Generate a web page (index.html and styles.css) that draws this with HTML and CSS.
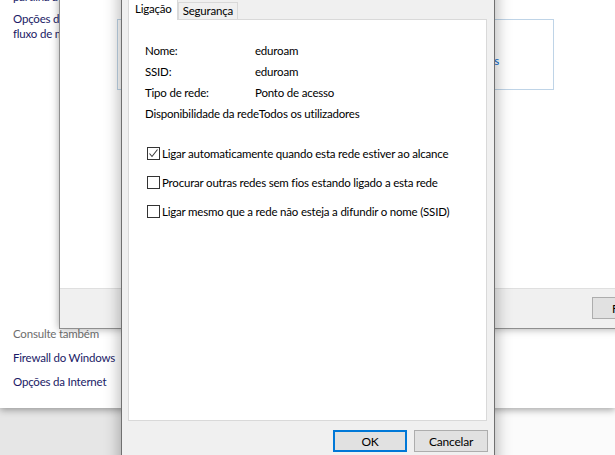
FILE: index.html
```html
<!DOCTYPE html>
<html lang="pt">
<head>
<meta charset="UTF-8">
<title>Propriedades de rede sem fios</title>
<link rel="stylesheet" href="styles.css">
</head>
<body>
<div class="desktop">
    <!-- Window behind everything, bottom right -->
    <div class="win back-win"></div>

    <!-- Control panel: Network and Sharing Center -->
    <div class="win cpanel">
        <div class="sidebar">
            <ul class="side-links">
                <li>Alterar definições de partilha avançadas</li>
                <li>Opções de transmissão em fluxo de multimédia</li>
            </ul>
            <div class="see-also">
                <div class="see-title">Consulte também</div>
                <div class="see-link">Firewall do Windows</div>
                <div class="see-link">Opções da Internet</div>
            </div>
        </div>
    </div>

    <!-- Wi-Fi status window -->
    <div class="win netwin">
        <div class="net-body">
            <div class="net-box">
                <span class="net-link">Propriedades de Rede Sem Fios</span>
            </div>
        </div>
        <div class="net-footer">
            <button class="btn">Fechar</button>
        </div>
    </div>

    <!-- Wireless network properties dialog -->
    <div class="win dialog">
        <div class="tabs">
            <span class="tab active">Ligação</span>
            <span class="tab">Segurança</span>
        </div>
        <div class="tab-panel">
            <div class="props">
                <div class="prop"><span class="prop-label">Nome:</span><span>eduroam</span></div>
                <div class="prop"><span class="prop-label">SSID:</span><span>eduroam</span></div>
                <div class="prop"><span class="prop-label">Tipo de rede:</span><span>Ponto de acesso</span></div>
                <div class="prop"><span class="prop-label">Disponibilidade da rede</span><span>Todos os utilizadores</span></div>
            </div>
            <div class="options">
                <div class="option">
                    <span class="checkbox">
                        <svg width="11" height="11" viewBox="0 0 11 11"><polyline points="1.5,5.5 4,8.5 9.5,1.5" fill="none" stroke="#3c3c3c" stroke-width="1.1"/></svg>
                    </span>
                    <span>Ligar automaticamente quando esta rede estiver ao alcance</span>
                </div>
                <div class="option">
                    <span class="checkbox"></span>
                    <span>Procurar outras redes sem fios estando ligado a esta rede</span>
                </div>
                <div class="option">
                    <span class="checkbox"></span>
                    <span>Ligar mesmo que a rede não esteja a difundir o nome (SSID)</span>
                </div>
            </div>
        </div>
        <div class="dialog-buttons">
            <button class="btn default">OK</button>
            <button class="btn">Cancelar</button>
        </div>
    </div>
</div>
</body>
</html>
```

FILE: styles.css
```css
/* Page = desktop */
body {
    margin: 0;
    font-family: "Segoe UI", Lato, sans-serif;
    font-size: 11.5px;
    letter-spacing: -0.2px;
    color: #000;
}
.desktop {
    position: relative;
    width: 615px;
    height: 455px;
    overflow: hidden;
    background-color: #e6e6e6;
}
.win {
    position: absolute;
    box-sizing: border-box;
}
/* Window peeking out at bottom right */
.back-win {
    left: 300px;
    top: 400px;
    width: 400px;
    height: 100px;
    background-color: #fbfbfb;
}
/* Control panel */
.cpanel {
    left: 0;
    top: -30px;
    width: 615px;
    height: 438px;
    background-color: #fff;
    box-shadow: 0 2px 7px rgba(0, 0, 0, 0.35);
}
.sidebar {
    display: flex;
    flex-direction: column;
    box-sizing: border-box;
    height: 100%;
    width: 150px;
    padding: 4px 0 18px 13px;
}
.side-links {
    list-style: none;
    margin: 0;
    padding: 0;
    color: #1a1a66;
    line-height: 15px;
}
.side-links li {
    margin-bottom: 7px;
}
.see-also {
    margin-top: auto;
    line-height: 16px;
}
.see-title {
    color: #6d6d6d;
    margin-bottom: 4px;
    white-space: nowrap;
}
.see-link {
    color: #1a1a66;
    margin-top: 8px;
    white-space: nowrap;
}
/* Network status window */
.netwin {
    left: 59px;
    top: -20px;
    width: 617px;
    height: 349px;
    display: flex;
    flex-direction: column;
    background-color: #fff;
    border: 1px solid #8f8f8f;
    box-shadow: 0 0 8px rgba(0, 0, 0, 0.35);
}
.net-body {
    flex: 1;
    padding: 38px 0 0 57px;
}
.net-box {
    box-sizing: border-box;
    width: 437px;
    height: 71px;
    padding: 33px 54px 0 0;
    border: 1px solid #bfd4e7;
    text-align: right;
    line-height: 16px;
}
.net-link {
    color: #0066cc;
    white-space: nowrap;
}
.net-footer {
    height: 40px;
    display: flex;
    align-items: flex-start;
    padding: 8px 0 0 532px;
    box-sizing: border-box;
    background-color: #f0f0f0;
    border-top: 1px solid #dfdfdf;
}
/* Buttons */
.btn {
    box-sizing: border-box;
    width: 74px;
    height: 22px;
    padding: 0;
    font-family: inherit;
    font-size: 12px;
    letter-spacing: inherit;
    color: #000;
    background-color: #e1e1e1;
    border: 1px solid #adadad;
}
.btn.default {
    border: 2px solid #0078d7;
}
/* Dialog */
.dialog {
    left: 121px;
    top: -30px;
    width: 374px;
    height: 520px;
    padding: 28px 7px 0 6px;
    background-color: #f0f0f0;
    border: 1px solid #707070;
    box-shadow: 0 0 14px 2px rgba(0, 0, 0, 0.28);
}
.tabs {
    display: flex;
    align-items: flex-end;
    height: 20px;
}
.tab {
    box-sizing: border-box;
    height: 17px;
    padding: 0 4px;
    line-height: 15px;
    white-space: nowrap;
    background-color: #f0f0f0;
    border: 1px solid #d9d9d9;
    border-bottom: none;
}
.tab.active {
    position: relative;
    z-index: 1;
    height: 21px;
    margin-bottom: -1px;
    padding: 0 5px 0 6px;
    line-height: 18px;
    background-color: #fff;
}
.tab-panel {
    box-sizing: border-box;
    height: 402px;
    padding: 20px 0 0 16px;
    background-color: #fff;
    border: 1px solid #d9d9d9;
}
.prop {
    display: flex;
    line-height: 21px;
    white-space: nowrap;
}
.prop-label {
    min-width: 110px;
}
.options {
    display: flex;
    flex-direction: column;
    gap: 13px;
    margin-top: 21px;
    padding-left: 2px;
}
.option {
    display: flex;
    align-items: center;
    gap: 2px;
    height: 16px;
    white-space: nowrap;
}
.checkbox {
    display: flex;
    flex-shrink: 0;
    align-items: center;
    justify-content: center;
    box-sizing: border-box;
    width: 13px;
    height: 13px;
    background-color: #fff;
    border: 1px solid #333;
}
.dialog-buttons {
    display: flex;
    justify-content: flex-end;
    gap: 7px;
    margin: 9px -1px 0 0;
}
```
